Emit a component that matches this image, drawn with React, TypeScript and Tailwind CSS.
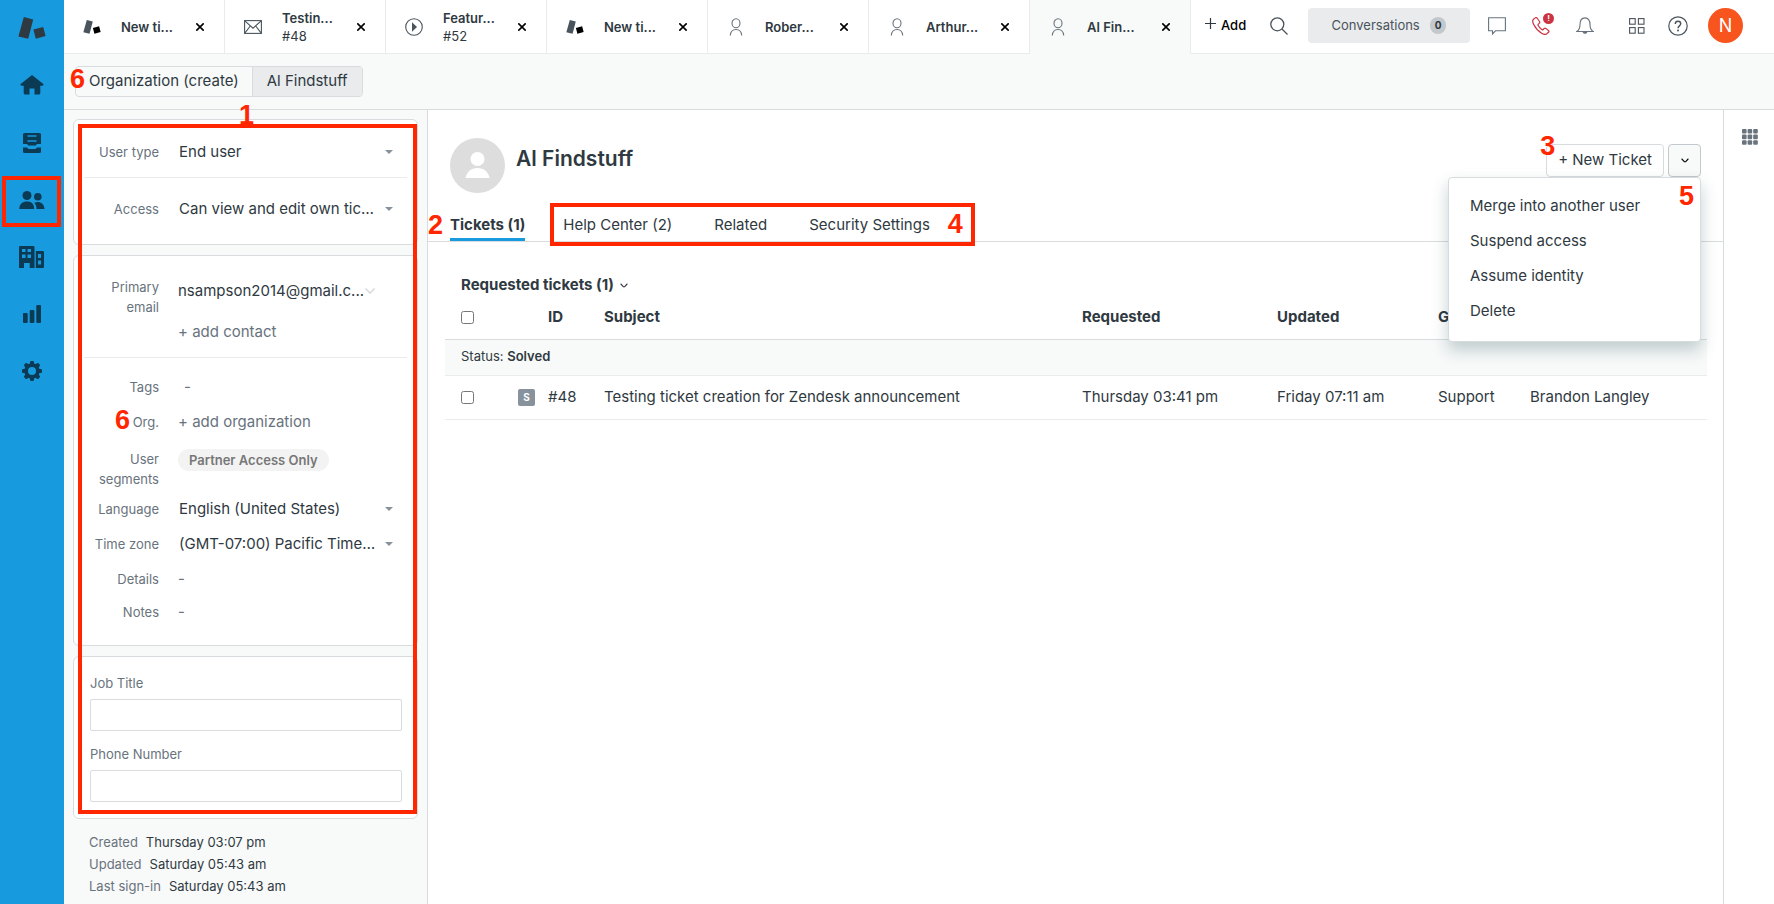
import React from "react";

function Mark({ className, dark }: { className: string; dark?: boolean }) {
  return (
    <svg viewBox="0 0 28 22" className={className} aria-hidden="true">
      <path d="M5.8 0 L15.2 2.4 L10.2 21.8 L0.4 19.4 Z" fill={dark ? "#2f3941" : "#49545c"} />
      <path d="M15.4 12.6 L25.2 10 L27.6 19 L17.8 21.8 Z" fill={dark ? "#2f3941" : "#000"} />
    </svg>
  );
}

function PersonOutline() {
  return (
    <svg viewBox="0 0 16 18" className="h-[18px] w-4" fill="none" stroke="#68737d" strokeWidth="1.1" aria-hidden="true">
      <ellipse cx="8" cy="5.2" rx="4" ry="4.5" />
      <path d="M2.3 17.5c.3-3.7 2.6-6 5.7-6s5.4 2.3 5.7 6" />
    </svg>
  );
}

function Envelope() {
  return (
    <svg viewBox="0 0 18 14" className="h-3.5 w-[18px]" fill="none" stroke="#49545c" strokeWidth="1.1" aria-hidden="true">
      <rect x=".6" y=".6" width="16.8" height="12.8" />
      <path d="M.8.9 9 8.2 17.2.9M.8 13.2 6.3 6M17.2 13.2 11.7 6" />
    </svg>
  );
}

function Play() {
  return (
    <svg viewBox="0 0 18 18" className="size-[18px]" fill="none" stroke="#49545c" strokeWidth="1.1" aria-hidden="true">
      <circle cx="9" cy="9" r="8.3" />
      <path d="M7 4.2v9.6l5-4.8z" fill="#49545c" stroke="none" />
    </svg>
  );
}

function Note({ className, children }: { className: string; children: string }) {
  return (
    <span className={`pointer-events-none absolute z-20 font-['Liberation_Sans',Arial,sans-serif] text-[27px] leading-[27px] font-bold text-[#ff2600] ${className}`}>
      {children}
    </span>
  );
}

type Tab = { title: string; sub?: string; icon: React.ReactNode; active?: boolean };

const tabMark = <Mark className="h-3.5 w-[18px]" />;

const tabs: Tab[] = [
  { title: "New ti...", icon: tabMark },
  { title: "Testin...", sub: "#48", icon: <Envelope /> },
  { title: "Featur...", sub: "#52", icon: <Play /> },
  { title: "New ti...", icon: tabMark },
  { title: "Rober...", icon: <PersonOutline /> },
  { title: "Arthur...", icon: <PersonOutline /> },
  { title: "Al Fin...", icon: <PersonOutline />, active: true },
];

function TopTab({ tab }: { tab: Tab }) {
  return (
    <div
      className={`flex w-[161px] shrink-0 items-center border-r border-b border-[#e9ebed] pr-[18px] pl-[19px] ${
        tab.active ? "border-b-[#f8f9f9] bg-[#f8f9f9]" : ""
      }`}
    >
      <a href="#" className="flex min-w-0 flex-1 items-center">
        <span className="flex w-[18px] shrink-0 justify-center">{tab.icon}</span>
        <span className="ml-5 text-[13px] leading-[18px]">
          <span className="block font-semibold">{tab.title}</span>
          {tab.sub && <span className="block">{tab.sub}</span>}
        </span>
      </a>
      <button type="button" aria-label="Close tab" className="p-0.5">
        <svg viewBox="0 0 8 8" className="size-2" stroke="#000" strokeWidth="1.6" aria-hidden="true">
          <path d="M.3.3 7.7 7.7M7.7.3.3 7.7" />
        </svg>
      </button>
    </div>
  );
}

function TopBar() {
  return (
    <header className="flex h-[54px] shrink-0 bg-white">
      {tabs.map((tab, i) => (
        <TopTab key={i} tab={tab} />
      ))}
      <div className="flex flex-1 items-center border-b border-[#e9ebed] pr-[31px] pl-3.5 pb-0.5">
        <button type="button" className="flex items-center gap-[5px] text-[13px] font-medium text-black">
          <svg viewBox="0 0 11 11" className="mb-1 size-[11px]" stroke="#2f3941" strokeWidth="1.2" aria-hidden="true">
            <path d="M5.5 0v11M0 5.500h11" />
          </svg>
          Add
        </button>
        <button type="button" aria-label="Search" className="ml-6">
          <svg viewBox="0 0 18 18" className="size-[18px]" fill="none" stroke="#49545c" strokeWidth="1.3" aria-hidden="true">
            <circle cx="7.3" cy="7.3" r="6.5" />
            <path d="m12 12 5.5 5.5" />
          </svg>
        </button>
        <button type="button" className="ml-auto flex h-[35px] w-[162px] items-center justify-center gap-2.5 rounded bg-[#e9ebed] text-[13px] text-[#49545c]">
          Conversations
          <span className="rounded-full bg-[#c2c8cc] px-[5px] text-[10px] leading-[17px] font-bold text-[#2f3941]">0</span>
        </button>
        <button type="button" aria-label="Chat" className="ml-[18px]">
          <svg viewBox="0 0 18 18" className="size-[18px]" fill="none" stroke="#68737d" strokeWidth="1.1" aria-hidden="true">
            <path d="M.6.8h16.8v13H7.5L4.5 17v-3.2H.6z" />
          </svg>
        </button>
        <button type="button" aria-label="Talk" className="relative ml-[26px]">
          <svg viewBox="0 0 18 18" className="size-[18px]" fill="none" stroke="#cc3340" strokeWidth="1.2" aria-hidden="true">
            <path d="M3.2.9 1.5 2.3C.3 3.4.7 5.6 1.7 7.5c1.7 3.3 4.5 6.7 7.9 8.8 1.8 1.1 4 1.5 5.2.5l1.7-1.500c.6-.6.5-1.2.1-1.600l-2.7-2.300c-.6-.4-1.2-.4-1.7.1l-1 1c-.4.4-1 .4-1.500 0-1.300-1-2.700-2.600-3.500-4-.3-.5-.2-1 .2-1.400l1-1c.5-.5.5-1 .1-1.600L5 1C4.500.4 3.800.4 3.200.9z" />
          </svg>
          <span className="absolute -top-1 left-[11px] flex size-[11px] items-center justify-center rounded-full bg-[#cc3340] text-[8px] font-bold text-white">!</span>
        </button>
        <button type="button" aria-label="Notifications" className="ml-[26px]">
          <svg viewBox="0 0 18 18" className="size-[18px]" fill="none" stroke="#68737d" strokeWidth="1.1" aria-hidden="true">
            <path d="M.8 14.500c2.600-1.500 3.200-3.500 3.200-7C4 3.400 6 .9 9 .9s5 2.500 5 6.600c0 3.500.6 5.500 3.200 7z" />
            <path d="M7.200 15a1.900 1.900 0 0 0 3.600 0z" fill="#68737d" />
          </svg>
        </button>
        <button type="button" aria-label="Products" className="ml-[35px]">
          <svg viewBox="0 0 16 16" className="size-4" fill="none" stroke="#49545c" strokeWidth="1.1" aria-hidden="true">
            <rect x=".6" y=".6" width="5.6" height="5.6" />
            <rect x="9.4" y=".6" width="5.6" height="5.6" />
            <rect x=".6" y="9.6" width="5.6" height="5.6" />
            <rect x="9.4" y="9.6" width="5.6" height="5.6" />
          </svg>
        </button>
        <button type="button" aria-label="Help" className="ml-[23px]">
          <svg viewBox="0 0 20 20" className="size-5" fill="none" stroke="#49545c" strokeWidth="1.2" aria-hidden="true">
            <circle cx="10" cy="10" r="9.2" />
            <path d="M7.300 8c0-1.700 1.200-2.700 2.700-2.700s2.700 1 2.700 2.500C12.700 9.900 10 9.900 10 12.200" strokeWidth="1.4" />
            <circle cx="10" cy="14.600" r="1" fill="#49545c" stroke="none" />
          </svg>
        </button>
        <button type="button" className="ml-5 flex size-[35px] items-center justify-center rounded-full bg-[#f8541e] text-lg text-white">
          N
        </button>
      </div>
    </header>
  );
}

function SideNav() {
  return (
    <nav className="flex w-16 shrink-0 flex-col items-center bg-[#179bde] pt-[17px] pr-px text-[#0b3b54]">
      <a href="#" aria-label="Main menu" className="mb-[17px]">
        <Mark dark className="h-[22px] w-7" />
      </a>
      <a href="#" aria-label="Home" className="flex h-[57px] items-center">
        <svg viewBox="0 0 24 20" className="h-5 w-6" fill="currentColor" aria-hidden="true">
          <path d="M12 0 .3 9.300 1.200 10.800H3.700V18.200a1.300 1.300 0 0 0 1.300 1.300H9.500v-6h5v6h4.500a1.300 1.300 0 0 0 1.300-1.300V10.800h2.500l.9-1.500z" />
        </svg>
      </a>
      <a href="#" aria-label="Views" className="flex h-[57px] items-center pt-0.5">
        <svg viewBox="0 0 18 20" className="h-5 w-[18px]" fill="currentColor" fillRule="evenodd" aria-hidden="true">
          <path d="M1.500 0h15A1.500 1.500 0 0 1 18 1.500V11H14.300a1.500 1.500 0 0 0-1.300 1.500H5A1.500 1.500 0 0 0 3.700 11H0V1.500A1.500 1.500 0 0 1 1.500 0zM4.500 2.300v1.500h9V2.300zM4.500 7.300v1.500h9V7.300z" />
          <path d="M0 14.500h4l1.500 1.500h7l1.500-1.500h4v4a1.500 1.500 0 0 1-1.500 1.500h-15A1.500 1.500 0 0 1 0 18.500z" />
        </svg>
      </a>
      <a href="#" aria-label="Customers" className="mt-1.5 mb-px flex h-[51px] w-[59px] items-center justify-center border-4 border-[#ff2600]">
        <svg viewBox="0 0 26 18" className="mb-1 h-[18px] w-[26px]" fill="currentColor" aria-hidden="true">
          <circle cx="8" cy="4.5" r="4.5" />
          <path d="M.3 18c0-5 3-7.500 7.700-7.500s7.200 2.500 7.200 7.500z" />
          <circle cx="18.800" cy="5.700" r="3.800" />
          <path d="M15.200 11.800c4.500-2 9.900-.5 10.300 6.200h-8c0-2.400-.8-4.600-2.300-6.200z" />
        </svg>
      </a>
      <a href="#" aria-label="Organizations" className="flex h-[57px] items-center">
        <svg viewBox="0 0 25 22" className="h-[22px] w-[25px]" fill="currentColor" fillRule="evenodd" aria-hidden="true">
          <path d="M1 0h13.500a1 1 0 0 1 1 1v21H10.700v-5H5v5H0V1a1 1 0 0 1 1-1zM3 3v3h3.500V3zm5.500 0v3H12V3zM3 8.500V12h3.500V8.500zm5.500 0V12H12V8.500z" />
          <path d="M16.800 5H24a1 1 0 0 1 1 1v15a1 1 0 0 1-1 1h-7.200zM19 8v4h3V8zm0 6.500v4h3v-4z" />
        </svg>
      </a>
      <a href="#" aria-label="Reporting" className="flex h-[57px] items-center">
        <svg viewBox="0 0 18 18" className="size-[18px]" fill="currentColor" aria-hidden="true">
          <rect y="8" width="4.700" height="10" rx="1" />
          <rect x="6.700" y="5" width="4.700" height="13" rx="1" />
          <rect x="13.300" width="4.700" height="18" rx="1" />
        </svg>
      </a>
      <a href="#" aria-label="Admin" className="flex h-[57px] items-center">
        <svg viewBox="0 0 20 20" className="size-5" aria-hidden="true">
          <g fill="currentColor">
            <circle cx="10" cy="10" r="7.800" />
            <rect x="8" width="4" height="20" rx="1.200" />
            <rect x="8" width="4" height="20" rx="1.200" transform="rotate(45 10 10)" />
            <rect x="8" width="4" height="20" rx="1.200" transform="rotate(90 10 10)" />
            <rect x="8" width="4" height="20" rx="1.200" transform="rotate(135 10 10)" />
          </g>
          <circle cx="10" cy="10" r="4" fill="#179bde" />
        </svg>
      </a>
    </nav>
  );
}

function Caret() {
  return (
    <svg viewBox="0 0 8 4" className="pointer-events-none absolute top-1/2 right-[14px] -mt-0.5 h-1 w-2" aria-hidden="true">
      <path d="M0 0h8L4 4z" fill="#87929d" />
    </svg>
  );
}

function SelectField({ id, label, value }: { id: string; label: string; value: string }) {
  return (
    <div className="relative flex h-[35px] items-center">
      <label htmlFor={id} className="w-[75px] shrink-0 text-right text-[13px] leading-5 text-[#68737d]">
        {label}
      </label>
      <select
        id={id}
        defaultValue={value}
        className="ml-5 w-[200px] appearance-none truncate bg-transparent text-[15px] leading-5"
      >
        <option>{value}</option>
      </select>
      <Caret />
    </div>
  );
}

function Row({ label, className = "", children }: { label: string; className?: string; children: React.ReactNode }) {
  return (
    <div className={`flex ${className}`}>
      <span className="w-[75px] shrink-0 text-right text-[13px] leading-5 text-[#68737d]">{label}</span>
      <div className="ml-[19px] min-w-0 flex-1 text-[15px] leading-5 text-[#68737d]">{children}</div>
    </div>
  );
}

function TextField({ id, label }: { id: string; label: string }) {
  return (
    <div>
      <label htmlFor={id} className="block text-[13px] leading-5 text-[#68737d]">
        {label}
      </label>
      <input id={id} type="text" className="mt-1.5 block h-8 w-full rounded-xs border border-[#d8dcde] bg-white px-2 text-[15px]" />
    </div>
  );
}

const card = "rounded-md border border-[#d8dcde] bg-white";

function ProfilePanel() {
  return (
    <aside className="w-[364px] shrink-0 border-r border-[#d8dcde] bg-[#f8f9f9] px-[9px] pt-[9px]">
      <div className="relative flex flex-col gap-2.5">
        <section className={`${card} px-2.5 pt-3.5 pb-[18px]`}>
          <SelectField id="user-type" label="User type" value="End user" />
          <hr className="mt-2 mb-[13px] border-[#e9ebed]" />
          <SelectField id="access" label="Access" value="Can view and edit own tickets only" />
        </section>

        <section className={`${card} px-2.5 pt-[21px] pb-[23px]`}>
          <Row label="Primary email">
            <button type="button" className="mt-1 flex items-center text-[#2f3941]">
              nsampson2014@gmail.c...
              <svg viewBox="0 0 12 8" className="h-2 w-3" fill="none" stroke="#d8dcde" strokeWidth="1.600" aria-hidden="true">
                <path d="m1.500 1.500 4.500 4.500 4.500-4.500" />
              </svg>
            </button>
            <button type="button" className="mt-[21px] block">+ add contact</button>
          </Row>
          <hr className="mt-[15px] mb-[19px] border-[#e9ebed]" />
          <Row label="Tags">
            <span className="ml-1.5">-</span>
          </Row>
          <Row label="Org." className="mt-[15px]">
            <button type="button">+ add organization</button>
          </Row>
          <Row label="User segments" className="mt-[17px] mb-0.5">
            <span className="inline-block rounded-full bg-[#f3f3f3] px-[11px] text-[13px] leading-[22px] font-semibold text-[#777]">
              Partner Access Only
            </span>
          </Row>
          <SelectField id="language" label="Language" value="English (United States)" />
          <SelectField id="time-zone" label="Time zone" value="(GMT-07:00) Pacific Time (US & Canada)" />
          <Row label="Details" className="mt-2">-</Row>
          <Row label="Notes" className="mt-[13px]">-</Row>
        </section>

        <section className={`${card} flex flex-col gap-[13px] py-4 pr-[15px] pl-4`}>
          <TextField id="job-title" label="Job Title" />
          <TextField id="phone" label="Phone Number" />
        </section>

        <div className="pointer-events-none absolute top-[5px] right-px bottom-[5px] left-[5px] border-4 border-[#ff2600]" />
        <Note className="-top-[17px] left-[166px]">1</Note>
        <Note className="top-[288px] left-[42px]">6</Note>
      </div>

      <dl className="mt-3 px-4 text-[13px] leading-[22px]">
        {[
          ["Created", "Thursday 03:07 pm"],
          ["Updated", "Saturday 05:43 am"],
          ["Last sign-in", "Saturday 05:43 am"],
        ].map(([k, v]) => (
          <div key={k} className="flex gap-2">
            <dt className="text-[#68737d]">{k}</dt>
            <dd>{v}</dd>
          </div>
        ))}
      </dl>
    </aside>
  );
}

function Chevron({ className }: { className: string }) {
  return (
    <svg viewBox="0 0 8 5" className={className} fill="none" stroke="currentColor" strokeWidth="1.2" aria-hidden="true">
      <path d="M.6.800C2 2 3 4 4 4s2-2 3.400-3.200" />
    </svg>
  );
}

function ProfileHeader() {
  return (
    <div className="flex items-start pt-7 pr-[22px] pl-[22px]">
      <svg viewBox="0 0 55 55" className="size-[55px]" aria-hidden="true">
        <circle cx="27.500" cy="27.500" r="27.500" fill="#ddd" />
        <circle cx="27.500" cy="21" r="7" fill="#fff" />
        <path d="M15.500 40c1-6 5.500-10 12-10s11 4 12 10z" fill="#fff" />
      </svg>
      <h1 className="mt-1.5 ml-[11px] text-[21px] leading-[30px] font-semibold">Al Findstuff</h1>
      <div className="relative mt-1.5 ml-auto flex gap-1">
        <button type="button" className="h-[33px] rounded border border-[#d8dcde] bg-white px-[11px] text-[15px]">
          + New Ticket
        </button>
        <button type="button" aria-label="More actions" className="flex size-[33px] items-center justify-center rounded border border-[#c2c8cc] bg-[#f8f9f9] text-black">
          <Chevron className="h-[5px] w-2" />
        </button>
        <Note className="-top-[11px] -left-1.5">3</Note>
        <div className="absolute top-[33px] right-0 z-10 w-[253px] rounded border border-[#d8dcde] bg-white pt-[11px] pb-3 shadow-[0_8px_16px_rgba(23,73,77,0.25)]">
          {["Merge into another user", "Suspend access", "Assume identity", "Delete"].map((t) => (
            <button key={t} type="button" className="block h-[35px] w-full px-[21px] text-left text-[15px]">
              {t}
            </button>
          ))}
          <Note className="top-[5px] right-1.5">5</Note>
        </div>
      </div>
    </div>
  );
}

function ProfileTabs() {
  return (
    <div className="relative flex h-[49px] items-end border-b border-[#d8dcde] pl-[22px] text-[15px] leading-5">
      <a href="#" className="border-b-3 border-[#179bde] pb-[3px] font-bold">Tickets (1)</a>
      <div className="relative -mb-[5px] ml-[25px] flex h-[43px] items-center gap-[42px] border-4 border-[#ff2600] pr-[41px] pl-[9px]">
        <a href="#">Help Center (2)</a>
        <a href="#">Related</a>
        <a href="#">Security Settings</a>
        <Note className="top-1 right-2">4</Note>
      </div>
      <Note className="bottom-0.5 left-0">2</Note>
    </div>
  );
}

function Tick({ label }: { label: string }) {
  return <input type="checkbox" aria-label={label} className="block size-[13px]" />;
}

function Tickets() {
  return (
    <section className="pr-4 pl-[17px] text-[15px]">
      <button type="button" className="mt-8 ml-4 flex items-center gap-1.5 leading-[22px] font-bold">
        Requested tickets (1)
        <Chevron className="h-[5px] w-2" />
      </button>
      <table className="w-full table-fixed border-collapse text-left">
        <colgroup>
          <col className="w-[65px]" />
          <col className="w-[38px]" />
          <col className="w-14" />
          <col />
          <col className="w-[195px]" />
          <col className="w-[161px]" />
          <col className="w-[92px]" />
          <col className="w-[177px]" />
        </colgroup>
        <thead>
          <tr className="h-[43px] border-b border-[#d8dcde]">
            <th className="pl-4"><Tick label="Select all tickets" /></th>
            <th />
            <th>ID</th>
            <th>Subject</th>
            <th>Requested</th>
            <th>Updated</th>
            <th>Group</th>
            <th>Assignee</th>
          </tr>
        </thead>
        <tbody>
          <tr className="h-9 border-b border-[#e9ebed] bg-[#f8f9f9]">
            <td colSpan={8} className="pl-4 text-[13px]">
              Status: <b className="font-semibold">Solved</b>
            </td>
          </tr>
          <tr className="h-11 border-b border-[#e9ebed]">
            <td className="pl-4"><Tick label="Select ticket 48" /></td>
            <td className="pl-2">
              <span className="flex size-[17px] items-center justify-center rounded-xs bg-[#87929d] text-[10px] font-bold text-white">S</span>
            </td>
            <td>#48</td>
            <td><a href="#">Testing ticket creation for Zendesk announcement</a></td>
            <td>Thursday 03:41 pm</td>
            <td>Friday 07:11 am</td>
            <td>Support</td>
            <td>Brandon Langley</td>
          </tr>
        </tbody>
      </table>
    </section>
  );
}

export default function App() {
  return (
    <div className="flex min-h-screen bg-white font-[Inter,'Liberation_Sans',sans-serif] text-[#2f3941]">
      <SideNav />
      <div className="flex min-w-0 flex-1 flex-col">
        <TopBar />
        <div className="relative flex h-14 shrink-0 items-center border-b border-[#d8dcde] bg-[#f8f9f9] pl-[11px]">
          <div className="flex h-[31px] overflow-hidden rounded border border-[#d8dcde] text-[15px] leading-7">
            <a href="#" className="border-r border-[#d8dcde] px-[13px]">Organization (create)</a>
            <a href="#" className="bg-[#e9ebed] px-3.5 pb-px">Al Findstuff</a>
          </div>
          <Note className="top-3 left-1.5">6</Note>
        </div>
        <div className="flex flex-1">
          <ProfilePanel />
          <main className="min-w-0 flex-1">
            <ProfileHeader />
            <ProfileTabs />
            <Tickets />
          </main>
          <aside className="w-[51px] shrink-0 border-l border-[#d8dcde] pt-[19px] pl-[18px]">
            <button type="button" aria-label="Apps" className="block">
              <svg viewBox="0 0 16 16" className="size-4" fill="#68737d" aria-hidden="true">
                {[0, 5.6, 11.2].map((y) =>
                  [0, 5.6, 11.2].map((x) => <rect key={`${x}-${y}`} x={x} y={y} width="4.6" height="4.6" rx="1" />)
                )}
              </svg>
            </button>
          </aside>
        </div>
      </div>
    </div>
  );
}
